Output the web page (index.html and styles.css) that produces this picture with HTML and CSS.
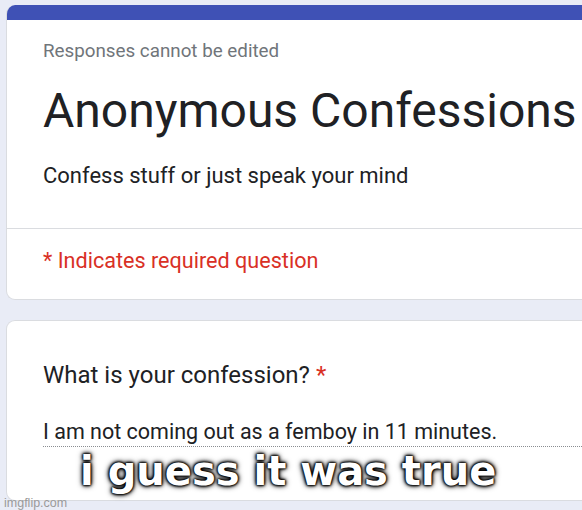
FILE: index.html
```html
<!DOCTYPE html>
<html>
<head>
<meta charset="utf-8">
<link rel="stylesheet" href="styles.css">
</head>
<body>
<div class="page">
  <div class="card header-card">
    <div class="bar"></div>
    <div class="head-body">
      <div class="note">Responses cannot be edited</div>
      <div class="title">Anonymous Confessions</div>
      <div class="desc">Confess stuff or just speak your mind</div>
    </div>
    <div class="divider"></div>
    <div class="required">* Indicates required question</div>
  </div>
  <div class="card question-card">
    <div class="question">What is your confession? <span class="star">*</span></div>
    <div class="answer">I am not coming out as a femboy in 11 minutes.</div>
  </div>
</div>
<div class="meme">i guess it was true</div>
<div class="watermark">imgflip.com</div>
</body>
</html>
```
FILE: styles.css
```css
html, body {
  margin: 0;
  padding: 0;
}
body {
  width: 582px;
  height: 510px;
  overflow: hidden;
  background: #e9ecf6;
  font-family: Roboto, "Liberation Sans", sans-serif;
  position: relative;
}
.page {
  padding: 5px 0 0 6px;
  display: flex;
  flex-direction: column;
  gap: 20px;
}
.card {
  background: #fff;
  border: 1px solid #dadce0;
  border-right: none;
  border-radius: 9px 0 0 9px;
  width: 580px;
  box-sizing: border-box;
}
.header-card {
  height: 295px;
  overflow: hidden;
  border-top: none;
}
.bar {
  height: 15px;
  background: #3f51b5;
}
.head-body {
  padding: 19px 0 0 36px;
  height: 208px;
  box-sizing: border-box;
}
.note {
  font-size: 18.8px;
  color: #70757a;
  line-height: 24px;
}
.title {
  font-size: 48px;
  color: #202124;
  line-height: 56px;
  margin-top: 20px;
  white-space: nowrap;
}
.desc {
  font-size: 22px;
  color: #202124;
  line-height: 28px;
  margin-top: 23px;
}
.divider {
  height: 1px;
  background: #dadce0;
}
.required {
  padding: 18px 0 0 36px;
  font-size: 21.6px;
  line-height: 28px;
  color: #d93025;
}
.question-card {
  height: 181px;
  padding: 39px 0 0 36px;
}
.question {
  font-size: 24px;
  line-height: 30px;
  color: #202124;
}
.star {
  color: #d93025;
}
.answer {
  margin-top: 29px;
  font-size: 21.5px;
  line-height: 26px;
  color: #202124;
  padding-bottom: 1px;
  border-bottom: 1px dotted #8a8d91;
  white-space: nowrap;
}
.meme {
  position: absolute;
  left: 80px;
  top: 445px;
  font-family: "Comic Sans MS", "DejaVu Sans", sans-serif;
  font-weight: bold;
  font-size: 40px;
  line-height: 52px;
  color: #fff;
  text-shadow: 0 0 2px #000, 0 0 2px #000, 0 0 3px #000, 0 0 4px #000, 0 0 6px #000;
}
.watermark {
  position: absolute;
  left: 4px;
  top: 496px;
  font-family: "Liberation Sans", sans-serif;
  font-size: 12.5px;
  color: #9a9a9a;
}
```
